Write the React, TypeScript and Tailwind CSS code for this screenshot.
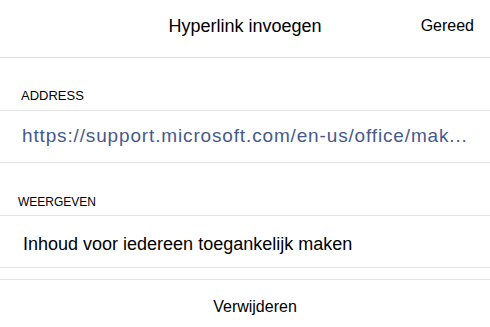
export default function App() {
  return (
    <div
      className="h-[327px] w-[490px] overflow-hidden bg-white text-black"
      style={{ fontFamily: '"Liberation Sans", Arial, sans-serif' }}
    >
      {/* header */}
      <div className="grid h-[58px] grid-cols-[1fr_auto_1fr] border-b border-[#dedede] pt-[17px] leading-none">
        <span />
        <span className="text-[18px]">Hyperlink invoegen</span>
        <span className="justify-self-end pr-4 pt-px text-[16px]">Gereed</span>
      </div>

      {/* address */}
      <div className="h-[53px] border-b border-[#e3e3e3] pl-[21px] pt-[31px] text-[13px] leading-none">
        ADDRESS
      </div>
      <div className="h-[52px] border-b border-[#e3e3e3] pl-[22px] pt-[15px] text-[19px] leading-none tracking-[0.85px] text-[#46598b] whitespace-nowrap">
        https://support.microsoft.com/en-us/office/mak...
      </div>

      {/* display text */}
      <div className="h-[53px] border-b border-[#e3e3e3] pl-[18px] pt-[33px] text-[12px] leading-none">
        WEERGEVEN
      </div>
      <div className="h-[52px] border-b border-[#e3e3e3] pl-[23px] pt-[19px] text-[18px] leading-none">
        Inhoud voor iedereen toegankelijk maken
      </div>

      <div className="h-[12px] border-b border-[#e3e3e3]" />

      <div className="flex justify-center pl-5 pt-[19px] text-[16px] leading-none">
        Verwijderen
      </div>
    </div>
  );
}
